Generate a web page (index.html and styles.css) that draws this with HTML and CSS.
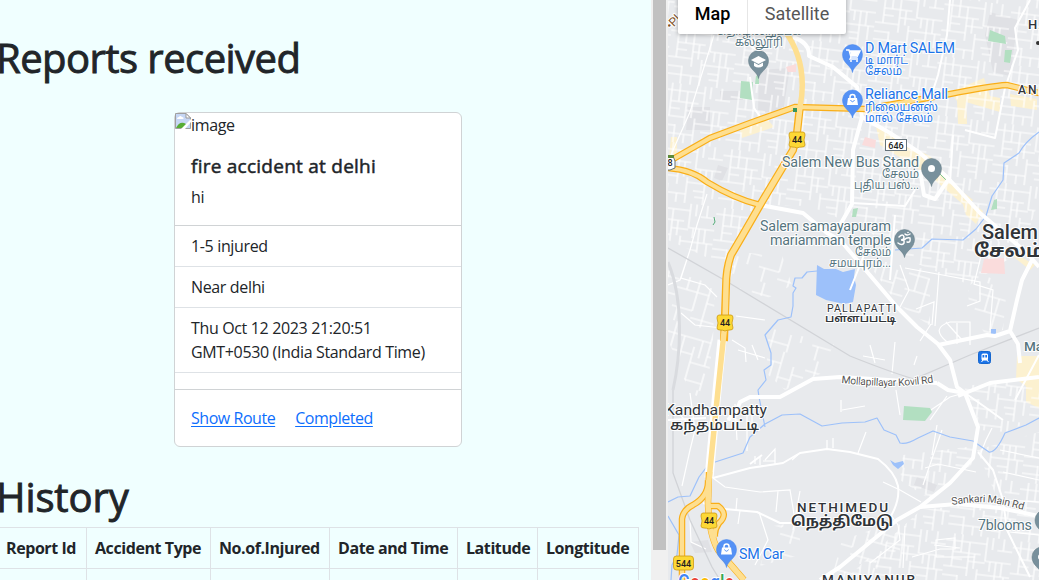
FILE: index.html
```html
<!DOCTYPE html>
<html lang="en">
<head>
<meta charset="utf-8">
<title>Reports received</title>
<link rel="stylesheet" href="styles.css">
</head>
<body>
<div class="app">
  <main class="reports">
    <h1 class="heading">Reports received</h1>
    <article class="card">
      <div class="card-image">
        <svg class="broken" width="16" height="16" viewBox="0 0 16 16"><path d="M.5 .5H11L15.500 5V15.500H.5Z" fill="#c6d7f5" stroke="#a0a0a0"/><path d="M2 6Q2 4 4 4Q5 2 7 4Q9 4 8.500 6Z" fill="#fff"/><path d="M1 15Q5 7 11 11V15Z" fill="#57ad36"/><path d="M11 .5V5H15.500Z" fill="#fff" stroke="#999"/><path d="M6 16L16 6V9L10 16Z" fill="#fff"/></svg><span>image</span>
      </div>
      <div class="card-body">
        <h5 class="card-title">fire accident at delhi</h5>
        <p class="card-text">hi</p>
      </div>
      <ul class="list">
        <li>1-5 injured</li>
        <li>Near delhi</li>
        <li>Thu Oct 12 2023 21:20:51<br>GMT+0530 (India Standard Time)</li>
        <li></li>
      </ul>
      <div class="card-links"><a href="#">Show Route</a><a href="#">Completed</a></div>
    </article>
    <h1 class="heading history">History</h1>
    <table class="table">
      <colgroup><col class="c1"><col class="c2"><col class="c3"><col class="c4"><col class="c5"><col class="c6"></colgroup>
      <thead><tr><th>Report Id</th><th>Accident Type</th><th>No.of.Injured</th><th>Date and Time</th><th>Latitude</th><th>Longtitude</th></tr></thead>
      <tbody><tr><td></td><td></td><td></td><td></td><td></td><td></td></tr></tbody>
    </table>
  </main>
  <div class="scroll"><div class="thumb"></div></div>
  <section class="map">
    <svg class="tiles" width="371" height="580" viewBox="668 0 371 580">
      <defs>
        <pattern id="streets" width="67" height="59" patternUnits="userSpaceOnUse" patternTransform="rotate(7)">
          <path class="minor" d="M0 7H41M8 0V33M8 18H36M24 7V41M0 33H24M41 0V24H67M52 24V59M34 38H67M34 33V59M15 41V59M0 50H34M52 12H67M58 0V12M24 26H41M61 38V52M41 46H52M16 0V18M30 18V33M8 25H18M46 24V34M58 24V38M0 42H15M25 50V59M43 52H52M47 0V12"/>
        </pattern>
        <pattern id="streets-b" width="73" height="61" patternUnits="userSpaceOnUse" patternTransform="rotate(16)">
          <path class="minor" d="M0 12H48M10 0V28M21 12V47M0 28H33M33 20V61M48 0V36M33 36H73M61 12V48M0 47H21M21 54H50M50 43V61M6 47V61M61 20H73M48 26H61M40 12V30"/>
        </pattern>
        <path id="pin" d="M0 18C-1 11-10 9-10 0A10 10 0 0 1 10 0C10 9 1 11 0 18Z"/>
        <path id="shield" d="M-6-8H6Q8-8 8-5L7 0L8 5Q8 7 5 7Q2 7 0 8Q-2 7-5 7Q-8 7-8 5L-7 0L-8-5Q-8-8-6-8Z"/>
        <g id="bag"><path d="M-4.500-2H4.500L5.500 5H-5.500Z" fill="#fff"/><path d="M-2.500-1V-3A2.500 2.500 0 0 1 2.500-3V-1" fill="none" stroke="#fff" stroke-width="1.500"/><path d="M-2 0Q0 3.500 2 0" fill="none" stroke="#5491f5"/></g>
        <path id="curve1" d="M841 383Q868 386 890 386T937 382"/>
        <path id="curve2" d="M952 505Q980 500 999 504T1026 511"/>
      </defs>
      <rect x="668" width="371" height="580" fill="#e8eaed"/>
      <g fill="#e0e1e5">
        <path d="M759 70L790 68L783 112L758 112ZM720 91H743V100H720ZM688 107H710V130H686ZM718 165L728 168L722 181L714 178ZM990 12L1018 20L1010 76L993 72L985 35ZM917 477L937 485L934 492L914 485ZM690 542L708 540L712 552L695 553Z"/>
      </g>
      <g fill="#fcf1d0">
        <path d="M671 137H677V157H669ZM740 130L768 120L774 127L742 138ZM950 92L984 78L990 96L1000 98V112L966 102L967 124H958L957 101ZM1010 94L1037 99V110L1011 106ZM875 122L900 142L930 156L958 188L973 200L966 207L930 176L880 145ZM960 194L983 211L976 224L966 215ZM1017 356H1039V408L1026 402V386L1016 379ZM1012 252L1035 265L1030 270L1014 257ZM862 109L950 88L951 94L864 115Z"/>
      </g>
      <path d="M668 0H1039V200L1022 250L970 285L920 265L866 230L810 206L764 205L735 250V270L668 240Z" fill="url(#streets)"/>
      <path d="M668 270L715 285L713 340L706 400L690 393L668 340ZM731 252L782 255L792 285L768 298L730 285ZM769 328L834 344L820 374L785 390L766 373ZM864 258L930 270V326L897 303ZM967 268L1007 285L1003 330L985 334L969 308Z" fill="url(#streets-b)"/>
      <path d="M960 386L1039 380V418L1005 432L979 430ZM903 455L974 446L972 464L931 500L900 480ZM977 450L1039 432V580H844L921 510L957 506L999 503Z" fill="url(#streets)"/>
      <path d="M773 526L800 522V555L760 566ZM842 540L900 520V580H831Z" fill="url(#streets-b)"/>
      <g class="minor">
        <path d="M714 35L690 112L670 157M707 194L697 225L690 250L680 280L668 285M690 250L681 278L705 285L717 297M681 313L695 325L722 328M736 316L765 320M732 340L745 348L746 362M738 350L765 358M752 345L758 360M690 393L695 430L690 450L682 486M695 430L680 415M747 410V451M752 404V430M735 404L737 440M727 420H738M765 460L775 449V464M755 464V456M760 465V457M763 461H775M800 453L792 460M827 449V440M833 448V438M713 478L725 487L760 492L790 490L795 520M740 511L738 524M736 510L737 498M800 491L793 530M778 491L776 512M759 512L768 540L755 565M690 520L691 542L706 549M842 410L865 406M896 390L900 415M925 414L950 397L964 393M841 400V412M883 482L900 490L921 502M870 563L900 540L898 525L891 515M905 526L903 568M912 557L940 549H955V538L936 540V557H975M934 545L960 548M866 432L858 453M942 430L935 450L923 485M937 425L932 455M947 396L930 420M925 468L938 464L976 472M980 455L986 440L992 428M1000 450L1039 458M1003 472L1039 480M1006 500L1039 502M1010 532L1039 535M939 272L935 326M931 324L920 341M916 309L934 302L932 325M947 342Q930 328 950 322H970V345M957 344V323M946 322L962 340M870 345L875 363M895 342L892 374M917 356L914 365M863 356L885 360M905 268L980 282L980 301L967 306M985 240L974 284L993 290L990 330M900 265L909 290L900 307"/>
      </g>
      <g fill="#b2dfc1"><path d="M741 81L753 82L752 100L740 98ZM756 76L759 74V84H755ZM990 30L1005 36L1006 44L988 41ZM1005 50H1012L1010 63L1004 62ZM904 406L930 408L932 412L925 421L903 420ZM853 209L858 208L856 217L852 217ZM994 200L997 199L997 209L991 210Z"/><path d="M714 217L715 222L713 225" stroke="#55ae79" fill="none"/><path d="M940 174L946 180" stroke="#81c995"/></g>
      <g fill="#fadcdc"><path d="M786 67L796 64V72H788ZM865 137L876 140L875 148L862 145ZM984 259L1004 258L1005 274L981 273Z"/></g>
      <g class="rail"><path d="M668 248L726 281L850 356Q890 372 914 379L970 355L1039 328M673 390L673 473L690 520L712 567L720 580"/><path class="ring" d="M668 262C684 300 681 354 673 390"/></g>
      <path fill="#9dc1fa" d="M817 265L824 269H836L843 272L855 269L854 277L856 285L853 302L844 304L826 300L816 295ZM890 460L895 463L903 461L904 464L898 469L893 465ZM991 329H996V334H991Z"/>
      <g class="river">
        <path d="M817 271L807 272L802 278L795 278L793 286L796 288L793 293V306L791 317L778 320L765 335L771 353V365L764 370L766 380L758 390L759 397L765 427"/>
        <path d="M668 502L678 497L690 496L699 477L709 464L743 453L750 437L765 424L782 415L800 414L822 426L842 423L865 422L877 418L884 430L896 435L900 443Q906 445 918 438L933 431L950 437L973 441L989 452Q996 453 1005 433L1026 425L1039 418"/>
        <path d="M1039 132Q1025 142 1019 153L1004 163L1003 180L992 196L986 216L976 229L963 240L932 239L922 248L895 250M668 516L679 535L677 555L672 565L671 580"/>
      </g>
      <g class="road small">
        <path d="M713 478L750 468L783 463L800 453L827 449L850 452L878 459Q895 472 898 486Q900 500 891 516M703 503L725 509L757 512L780 523L797 523M978 452L993 470L1003 500L1007 530L1030 577M735 35L755 49L769 57M750 77L754 108L761 118M852 203L905 206L915 190M895 215L890 280M864 255L850 290M1015 400L1039 355M965 393L985 407L1003 420M950 0L947 35L938 75L930 100M1030 0L1015 28L1018 50L1005 88L995 138L965 130M953 135L950 183M668 420L706 418M762 455L750 464"/>
      </g>
      <g class="road">
        <path d="M793 37Q810 43 809 56L833 67L857 87L862 117L890 133L920 153L947 177L980 213L1027 253L1039 267"/>
        <path d="M862 117L853 150L852 204L840 225M760 205L803 213L827 233L840 240L863 267L897 307L917 327L938 344L950 360L957 387L965 393L978 427L973 458L950 483L920 507L897 520L840 567L820 580"/>
        <path d="M920 507L957 504L1000 508L1039 516M938 345L987 335L995 336L1010 331L1017 300L1022 280L1032 260M1010 331L1018 344L1020 363M958 396L990 383L1039 377M965 393L948 390L937 383M728 420L737 410L740 402L750 397L780 397L813 379L840 377L937 383"/>
        <path d="M920 170L924 195L935 199L948 180"/>
      </g>
      <path class="road wide" d="M722 340L718 380L709 478"/>
      <g class="highway-edge">
        <path d="M668 162L710 138L750 123L795 107L866 109L950 94Q990 86 1007 85L1039 93M668 168Q693 170 707 182Q735 199 760 205M709 472L708 503Q709 534 718 550L744 580M682 580L682 519Q683 510 693 505Q709 496 708 480M708 506H718Q729 514 719 523Q714 530 715 537"/><path class="broad" d="M800 105L797 133L793 150L763 200Q740 240 731 255Q726 269 726 287L724 341"/>
      </g>
      <g class="highway">
        <path d="M776 20Q797 43 801 69Q804 88 800 107L797 133L793 150L763 200Q740 240 731 255Q726 269 726 287L725 323L718 390L709 480L708 503Q709 534 718 550L744 580"/>
        <path class="thin" d="M668 162L710 138L750 123L795 107L866 109L950 94Q990 86 1007 85L1039 93M668 168Q693 170 707 182Q735 199 760 205M682 580L682 519Q683 510 693 505Q709 496 708 480M708 506H718Q729 514 719 523Q714 530 715 537"/>
      </g>
      <path d="M793 108H797V112H793Z" fill="#35945c"/>

      <g class="shields">
        <use href="#shield" x="797" y="140"/><use href="#shield" x="725" y="323"/><use href="#shield" x="709" y="521"/>
        <rect x="673.500" y="556" width="20" height="14" rx="3"/>
      </g>
      <g class="shield-text"><text x="797" y="143">44</text><text x="725" y="326">44</text><text x="709" y="524">44</text><text x="683.500" y="566.500">544</text></g>
      <path d="M661 156H673Q676 160 675 168L670 170H661Z" fill="#fff" stroke="#65727a"/><path d="M664 155H674V158H664Z" fill="#5d8a3a"/><text class="code" x="670" y="166">8</text>
      <rect x="885.500" y="139.500" width="21" height="11" fill="#fff" stroke="#65727a"/><text class="code" x="896" y="149">646</text>

      <g class="pins">
        <use href="#pin" x="758.500" y="60.500" class="slate"/><use href="#pin" x="852.500" y="54.500" class="blue"/><use href="#pin" x="852.500" y="100" class="blue"/><use href="#pin" x="931.500" y="168.500" class="slate"/><use href="#pin" x="904.500" y="239.500" class="slate"/><use href="#pin" x="726.500" y="549.500" class="blue"/><use href="#pin" x="1045" y="520" class="slate"/><use href="#pin" x="1042" y="557" class="slate"/>
      </g>
      <path d="M751 60L758.500 56L766 60L758.500 64ZM754 62.500V66Q758.500 69 763 66V62.500L758.500 65Z" fill="#fff"/>
      <path d="M846 50H849L851 57H857L860 51H850M851 57L850 59H858" fill="none" stroke="#fff" stroke-width="1.400"/><path d="M850 51H860L857 56H851Z" fill="#fff"/><circle cx="851" cy="61" r="1" fill="#fff"/><circle cx="857" cy="61" r="1" fill="#fff"/>
      <use href="#bag" x="852.500" y="100"/><use href="#bag" x="726.500" y="549.500"/>
      <circle cx="931.500" cy="168.500" r="3.500" fill="#fff"/><circle cx="1041" cy="557" r="3" fill="#fff"/>
      <g fill="none" stroke="#fff" stroke-width="1.500" stroke-linecap="round"><path d="M899 237Q903 233 904 237Q904 240 901 240Q905 240 904 243Q902 246 898 243M904 240Q907 237 910 238Q911 243 907 242M905 234Q907 236 910 234"/></g><circle cx="908" cy="232.500" r=".8" fill="#fff"/>
      <rect x="978.500" y="351.500" width="12" height="12" rx="2" fill="#1a73e8" stroke="#1767ce"/><rect x="981.500" y="353.500" width="6.500" height="7" rx="1.500" fill="#fff"/><path d="M982.500 355H984.300V357.500H982.500ZM985.300 355H987V357.500H985.300Z" fill="#1a73e8"/><path d="M983 360L981.500 362M987 360L988.500 362" stroke="#fff"/>

      <g class="label slate-text">
        <text x="716" y="35" font-size="11" textLength="85">தொழில்நுட்பக்</text><text x="735" y="46" font-size="12" textLength="48" lengthAdjust="spacingAndGlyphs">கல்லூரி</text>
        <text x="782" y="167" textLength="137">Salem New Bus Stand</text><text x="882" y="178" font-size="12" textLength="37" lengthAdjust="spacingAndGlyphs">சேலம்</text><text x="854" y="189" font-size="12" textLength="65" lengthAdjust="spacingAndGlyphs">புதிய பஸ்...</text>
        <text x="760" y="231" textLength="131">Salem samayapuram</text><text x="770" y="245" textLength="121">mariamman temple</text><text x="855" y="256" font-size="12" textLength="36" lengthAdjust="spacingAndGlyphs">சேலம்</text><text x="829" y="267" font-size="12" textLength="62" lengthAdjust="spacingAndGlyphs">சமயபுரம்...</text>
        <text x="978" y="530" textLength="54">7blooms</text><text x="1024" y="351" font-size="13.500" font-weight="500">Market</text>
      </g>
      <g class="label blue-text">
        <text x="865" y="53" textLength="90">D Mart SALEM</text><text x="865" y="64" font-size="12" textLength="43" lengthAdjust="spacingAndGlyphs">டி மார்ட்</text><text x="865" y="75" font-size="12" textLength="37" lengthAdjust="spacingAndGlyphs">சேலம்</text>
        <text x="865" y="99" textLength="83">Reliance Mall</text><text x="865" y="111" font-size="12" textLength="73" lengthAdjust="spacingAndGlyphs">ரிலையன்ஸ்</text><text x="865" y="122" font-size="12" textLength="68" lengthAdjust="spacingAndGlyphs">மால் சேலம்</text>
        <text x="739" y="559" textLength="45">SM Car</text>
      </g>
      <g class="label place">
        <text x="982" y="239" font-size="20" font-weight="500" textLength="56" lengthAdjust="spacingAndGlyphs">Salem</text><text x="974" y="257" font-size="18" font-weight="700" textLength="70" lengthAdjust="spacingAndGlyphs">சேலம்</text>
        <text x="827" y="312" font-size="10.500" textLength="69">PALLAPATTI</text><text x="825" y="322" font-size="11" font-weight="600" textLength="71" lengthAdjust="spacingAndGlyphs">பள்ளப்பட்டி</text>
        <text x="665" y="415" font-size="15.500" textLength="102" lengthAdjust="spacingAndGlyphs">Kandhampatty</text><text x="670" y="430" font-size="14" font-weight="500" textLength="89" lengthAdjust="spacingAndGlyphs">கந்தம்பட்டி</text>
        <text x="797" y="512" font-size="13.500" font-weight="500" textLength="91">NETHIMEDU</text><text x="791" y="526" font-size="14" font-weight="700" textLength="102" lengthAdjust="spacingAndGlyphs">நெத்திமேடு</text>
        <text x="822" y="584" font-size="13.500" font-weight="500" textLength="93">MANIYANUR</text><text x="1028" y="29" font-size="13" font-weight="500" letter-spacing="1.500">HASTHAMPATTI</text><text x="1018" y="94" font-size="12" font-weight="500" letter-spacing="2">ANNATHANAPATTI</text>
      </g>
      <g class="label route"><text><textPath href="#curve1" textLength="93">Mollapillayar Kovil Rd</textPath></text><text><textPath href="#curve2" textLength="72">Sankari Main Rd</textPath></text></g>
      <text class="pl" transform="translate(671 30) rotate(-45)">&#8226;Pl</text><circle cx="1038" cy="43" r="2" fill="#333"/>
      <g class="google"><text x="678" y="590" textLength="56" lengthAdjust="spacingAndGlyphs"><tspan fill="#4285f4">G</tspan><tspan fill="#ea4335">o</tspan><tspan fill="#fbbc04">o</tspan><tspan fill="#4285f4">g</tspan><tspan fill="#34a853">l</tspan><tspan fill="#ea4335">e</tspan></text></g>
    </svg>
    <div class="map-type"><button class="active">Map</button><button>Satellite</button></div>
  </section>
</div>
</body>
</html>
```
FILE: styles.css
```css
* { box-sizing: border-box; }
body { margin: 0; overflow: hidden; background: #f0ffff; color: #212529; font: 16px/24px "Open Sans", "Noto Sans", sans-serif; letter-spacing: -.35px; }
.app { display: flex; height: 580px; overflow: hidden; }
.reports { flex: 0 0 651px; overflow: hidden; background: #f0ffff; }
.heading { margin: 34px 0 0 -4px; font-size: 40px; line-height: 48px; font-weight: 400; letter-spacing: -.55px; white-space: nowrap; -webkit-text-stroke: .9px #212529; }
.history { margin-top: 26px; letter-spacing: -.1px; }
.card { width: 288px; margin: 30px 0 0 174px; background: #fff; border: 1px solid #d0d3d5; border-radius: 6px; }
.card-image { display: flex; height: 24px; }
.card-body { padding: 16px; }
.card-title { position: relative; top: 1px; margin: 0 0 8px; font-size: 19px; line-height: 24px; font-weight: 400; letter-spacing: .25px; -webkit-text-stroke: .5px #212529; }
.card-text { margin: 0; }
.list { list-style: none; margin: 0; padding: 0; border-top: 1px solid #d0d3d5; }
.list li { padding: 8px 16px; border-bottom: 1px solid #dee2e6; white-space: nowrap; }
.list li:last-child { border-color: #d0d3d5; }
.card-links { display: flex; gap: 20px; padding: 16px; letter-spacing: -.46px; }
.card-links a { color: #0d6efd; text-underline-offset: 2px; }
.table { table-layout: fixed; width: 641px; margin: 6px 0 0 -3px; border-collapse: collapse; letter-spacing: -.42px; }
.table th, .table td { height: 41px; padding: 8px; border: 1px solid #dee2e6; text-align: left; white-space: nowrap; font-weight: 700; }
.c1 { width: 89px; } .c2 { width: 124px; } .c3 { width: 119px; } .c4 { width: 128px; } .c5 { width: 80px; } .c6 { width: 101px; }
.scroll { flex: 0 0 17px; padding: 0 2px; background: #f0f0f0; }
.thumb { height: 550px; background: #c1c1c1; }
.map { position: relative; flex: 0 0 371px; overflow: hidden; letter-spacing: 0; }
.tiles { display: block; font-family: Roboto, "Noto Sans Tamil", sans-serif; }
.map-type { position: absolute; left: 10px; top: -6px; display: flex; height: 40px; background: #fff; box-shadow: 0 1px 4px rgba(0,0,0,.3); border-radius: 2px; }
.map-type button { width: 98px; padding: 0; border: 0; background: none; font: 18px/40px Roboto, sans-serif; color: #565656; }
.map-type .active { width: 70px; border-right: 1px solid #e6e6e6; color: #000; font-weight: 500; }
.minor { fill: none; stroke: #fff; stroke-width: 1.2; }
.rail { fill: none; stroke: #d1d3d7; stroke-width: 1.3; }
.ring { stroke: #d9dbdf; stroke-width: 3; }
.river { fill: none; stroke: #9dc1fa; stroke-width: 1.2; stroke-linejoin: round; }
.road { fill: none; stroke: #fff; stroke-width: 4; stroke-linejoin: round; }
.small { stroke-width: 2; }
.wide { stroke-width: 9; }
.highway-edge { fill: none; stroke: #f9ae18; stroke-width: 6.5; }
.broad { stroke-width: 8; }
.highway { fill: none; stroke: #fedf90; stroke-width: 5.5; stroke-linejoin: round; }
.thin { stroke-width: 4.2; }
.shields { fill: #fdd835; stroke: #cb9a16; stroke-width: .8; }
.shield-text, .code { font-size: 9px; font-weight: 500; text-anchor: middle; fill: #222; }
.slate { fill: #78909c; stroke: #607983; stroke-width: .5; }
.blue { fill: #5491f5; stroke: #4382ea; stroke-width: .5; }
.label { font-size: 14.3px; paint-order: stroke; stroke: #fff; stroke-width: 2px; stroke-linejoin: round; }
.slate-text { fill: #567580; }
.blue-text { fill: #1a73e8; }
.place { fill: #303438; }
.route { font-size: 10.5px; fill: #555; }
.pl { font-size: 12px; fill: #80501e; stroke: #fff; stroke-width: 2px; paint-order: stroke; }
.google { font: 500 22px Roboto, sans-serif; stroke: #fff; stroke-width: 2px; paint-order: stroke; }
```
